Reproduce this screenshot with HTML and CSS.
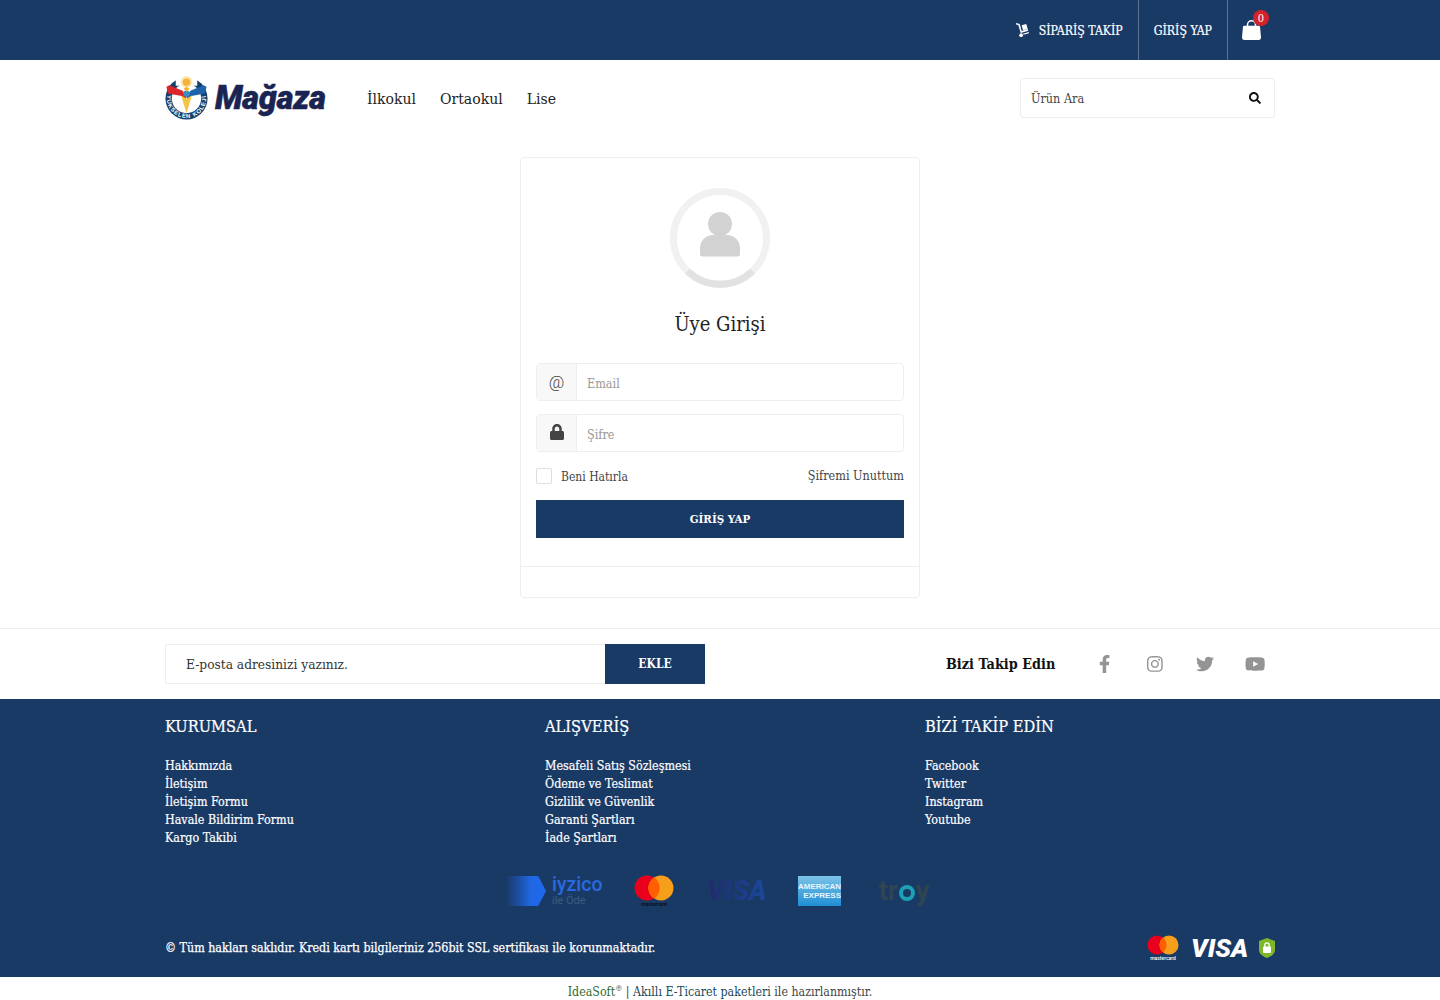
FILE: index.html
```html
<!DOCTYPE html>
<html lang="tr">
<head>
<meta charset="utf-8">
<title>Üye Girişi</title>
<link rel="stylesheet" href="styles.css">
</head>
<body>
<div class="topbar">
  <div class="container topbar-in">
    <a class="top-item"><svg class="top-ico" viewBox="0 0 16 16"><path d="M1 1.500l2.500 .6 2.600 8.600 8-2.400-.6-1.800-6.400 1.900L5 1 1.300 0z" fill="#fff"/><path d="M7 2.500l5-1.500 1.600 5.300-5 1.500z" fill="#fff"/><circle cx="6.500" cy="13" r="2" fill="#fff"/><path d="M9 12.600l6-1.800-.4-1.200-6 1.800z" fill="#fff"/></svg><span>SİPARİŞ TAKİP</span></a>
    <a class="top-item bordered">GİRİŞ YAP</a>
    <a class="cart">
      <svg class="bag" viewBox="0 0 20 22"><path d="M5.800 9V6a4.200 4.200 0 018.400 0v3" fill="none" stroke="#fff" stroke-width="1.600"/><path d="M2.500 7h15a1.500 1.500 0 011.500 1.400l1 10.800a2.600 2.600 0 01-2.600 2.800H2.600A2.600 2.600 0 010 19.200L1 8.400A1.500 1.500 0 012.500 7z" fill="#fff"/></svg>
      <span class="badge">0</span>
    </a>
  </div>
</div>

<header class="container header">
  <a class="logo">
    <svg class="logo-mark" viewBox="0 0 46 46">
      <defs><path id="arc" d="M4.200 17.200A20 20 0 1 0 41.800 17.200"/></defs>
      <circle cx="23" cy="24" r="21.500" fill="#15406b"/>
      <circle cx="23" cy="24" r="15" fill="#fff"/>
      <path d="M12 0h22v11H12z" fill="#fff"/>
      <circle cx="23" cy="7" r="6" fill="#fbe6ae"/>
      <circle cx="23" cy="7.500" r="3.800" fill="#f5b335"/>
      <path d="M2.500 12l3-1.500L19 16l4 6-1 4-4-4.500L4 19z" fill="#d9252b"/>
      <path d="M43.500 12l-3-1.500L27 16l-4 6 1 4 4-4.500L42 19z" fill="#1f63ad"/>
      <path d="M17.500 21l5.500 3 5.500-3L23 39z" fill="#f6c343"/>
      <circle cx="23" cy="19" r="3.200" fill="#3b8fc4"/>
      <path d="M20 14l3 3 3-3-3-2z" fill="#f5b335"/>
      <text class="logo-arc"><textPath href="#arc" startOffset="50%" text-anchor="middle">YÜKSELEN KOLEJİ</textPath></text>
    </svg>
    <span class="logo-word">Mağaza</span>
  </a>
  <nav class="nav"><a>İlkokul</a><a>Ortaokul</a><a>Lise</a></nav>
  <div class="search">
    <span>Ürün Ara</span>
    <svg class="search-ico" viewBox="0 0 512 512"><path fill="#111" d="M505 442.700L405.300 343c-4.500-4.500-10.600-7-17-7H372c27.600-35.300 44-79.700 44-128C416 93.100 322.900 0 208 0S0 93.100 0 208s93.100 208 208 208c48.300 0 92.700-16.400 128-44v16.300c0 6.400 2.500 12.500 7 17l99.700 99.700c9.400 9.400 24.600 9.400 33.900 0l28.300-28.300c9.400-9.400 9.400-24.600.1-34zM208 336c-70.700 0-128-57.200-128-128 0-70.700 57.200-128 128-128 70.700 0 128 57.200 128 128 0 70.700-57.200 128-128 128z"/></svg>
  </div>
</header>

<main class="main">
  <section class="card">
    <div class="card-body">
      <svg class="avatar" viewBox="0 0 100 100">
        <circle cx="50" cy="50" r="46.500" fill="none" stroke="#f1f1f1" stroke-width="7"/>
        <path d="M17.500 83A46.500 46.500 0 0 0 82.500 83" fill="none" stroke="#e2e2e2" stroke-width="7"/>
        <circle cx="50" cy="36" r="12" fill="#d2d2d2"/>
        <path d="M30 66V60a13 13 0 0 1 13-13h14a13 13 0 0 1 13 13v6a2.500 2.500 0 0 1-2.500 2.500h-35A2.500 2.500 0 0 1 30 66z" fill="#d2d2d2"/>
      </svg>
      <h1 class="title">Üye Girişi</h1>
      <div class="field">
        <span class="addon at">@</span>
        <span class="ph">Email</span>
      </div>
      <div class="field">
        <span class="addon"><svg class="lock" viewBox="0 0 448 512"><path fill="#444" d="M400 224h-24v-72C376 68.200 307.800 0 224 0S72 68.200 72 152v72H48c-26.500 0-48 21.500-48 48v192c0 26.500 21.500 48 48 48h352c26.500 0 48-21.500 48-48V272c0-26.500-21.500-48-48-48zm-104 0H152v-72c0-39.700 32.300-72 72-72s72 32.300 72 72v72z"/></svg></span>
        <span class="ph">Şifre</span>
      </div>
      <div class="options">
        <label class="remember"><span class="check"></span>Beni Hatırla</label>
        <a class="forgot">Şifremi Unuttum</a>
      </div>
      <a class="submit">GİRİŞ YAP</a>
    </div>
    <div class="card-foot"></div>
  </section>
</main>

<section class="news">
  <div class="container news-in">
    <div class="news-form">
      <span class="news-input">E-posta adresinizi yazınız.</span>
      <a class="news-btn">EKLE</a>
    </div>
    <div class="social">
      <strong class="social-title">Bizi Takip Edin</strong>
      <a class="soc"><svg viewBox="0 0 320 512" class="soc-ico"><path fill="#949494" d="M279.100 288l14.200-92.700h-88.900v-60.100c0-25.300 12.400-50 52.200-50h40.400V6.300S260.400 0 225.400 0c-73.200 0-121.100 44.400-121.100 124.700v70.600H22.900V288h81.400v224h100.200V288z"/></svg></a>
      <a class="soc"><svg viewBox="0 0 448 512" class="soc-ico"><path fill="#949494" d="M224.100 141c-63.600 0-114.900 51.300-114.900 114.900s51.300 114.900 114.900 114.900S339 319.500 339 255.900 287.700 141 224.100 141zm0 189.600c-41.100 0-74.700-33.500-74.700-74.700s33.500-74.700 74.700-74.700 74.700 33.500 74.700 74.700-33.600 74.700-74.700 74.700zm146.400-194.300c0 14.900-12 26.800-26.800 26.800-14.900 0-26.800-12-26.800-26.800s12-26.800 26.800-26.800 26.800 12 26.800 26.800zm76.100 27.200c-1.700-35.900-9.900-67.700-36.200-93.900-26.200-26.200-58-34.400-93.900-36.200-37-2.100-147.900-2.100-184.900 0-35.800 1.700-67.600 9.900-93.900 36.100s-34.400 58-36.200 93.900c-2.100 37-2.100 147.900 0 184.900 1.700 35.900 9.900 67.700 36.200 93.900s58 34.400 93.900 36.200c37 2.100 147.900 2.100 184.900 0 35.900-1.700 67.700-9.900 93.900-36.200 26.200-26.200 34.400-58 36.200-93.900 2.100-37 2.100-147.800 0-184.800zM398.800 388c-7.800 19.600-22.900 34.700-42.600 42.600-29.500 11.700-99.500 9-132.100 9s-102.700 2.600-132.100-9c-19.600-7.800-34.700-22.900-42.600-42.600-11.700-29.500-9-99.500-9-132.100s-2.600-102.700 9-132.100c7.800-19.600 22.900-34.700 42.600-42.600 29.500-11.700 99.500-9 132.100-9s102.700-2.600 132.100 9c19.600 7.800 34.700 22.900 42.600 42.600 11.700 29.500 9 99.500 9 132.100s2.700 102.700-9 132.100z"/></svg></a>
      <a class="soc"><svg viewBox="0 0 512 512" class="soc-ico"><path fill="#949494" d="M459.400 151.700c.3 4.500.3 9.100.3 13.600 0 138.700-105.600 298.600-298.600 298.600-59.500 0-114.700-17.200-161.100-47.100 8.400 1 16.600 1.300 25.300 1.300 49.100 0 94.200-16.600 130.300-44.800-46.100-1-84.800-31.200-98.100-72.800 6.500 1 13 1.600 19.800 1.600 9.400 0 18.800-1.300 27.600-3.600-48.100-9.700-84.100-52-84.100-103v-1.300c14 7.800 30.200 12.700 47.400 13.300-28.300-18.800-46.800-51-46.800-87.400 0-19.500 5.200-37.400 14.300-53 51.700 63.700 129.300 105.300 216.400 109.800-1.600-7.800-2.600-15.900-2.600-24 0-57.800 46.800-104.900 104.900-104.900 30.200 0 57.500 12.700 76.700 33.100 23.700-4.500 46.500-13.300 66.600-25.300-7.800 24-24.400 44.800-46.100 57.800 21.100-2.300 41.600-8.100 60.400-16.200-14.300 20.800-32.200 39.300-52.600 54.200z"/></svg></a>
      <a class="soc"><svg viewBox="0 0 576 512" class="soc-ico"><path fill="#949494" d="M549.700 124.100c-6.300-23.700-24.800-42.300-48.300-48.600C458.800 64 288 64 288 64S117.200 64 74.600 75.500c-23.500 6.300-42 24.900-48.300 48.600-11.400 42.900-11.400 132.300-11.400 132.300s0 89.400 11.400 132.300c6.300 23.700 24.800 41.500 48.300 47.800C117.200 448 288 448 288 448s170.800 0 213.400-11.500c23.500-6.300 42-24.200 48.300-47.800 11.400-42.900 11.400-132.300 11.400-132.300s0-89.400-11.400-132.300zm-317.500 213.500V175.200l142.700 81.200-142.700 81.200z"/></svg></a>
    </div>
  </div>
</section>

<footer class="footer">
  <div class="container">
    <div class="cols">
      <div class="col">
        <h4>KURUMSAL</h4>
        <a>Hakkımızda</a><a>İletişim</a><a>İletişim Formu</a><a>Havale Bildirim Formu</a><a>Kargo Takibi</a>
      </div>
      <div class="col">
        <h4>ALIŞVERİŞ</h4>
        <a>Mesafeli Satış Sözleşmesi</a><a>Ödeme ve Teslimat</a><a>Gizlilik ve Güvenlik</a><a>Garanti Şartları</a><a>İade Şartları</a>
      </div>
      <div class="col col-last">
        <h4>BİZİ TAKİP EDİN</h4>
        <a>Facebook</a><a>Twitter</a><a>Instagram</a><a>Youtube</a>
      </div>
    </div>
    <div class="pay-row">
      <div class="iyzico">
        <svg class="iyz-hex" viewBox="0 0 40 32"><defs><linearGradient id="hx" x1="0" x2="1"><stop offset="0" stop-color="#1c5fd0" stop-opacity="0"/><stop offset=".6" stop-color="#1f66e0"/><stop offset="1" stop-color="#1f6af0"/></linearGradient></defs><path d="M0 1h31a2 2 0 011.600 .8L40 16l-7.400 14.200a2 2 0 01-1.600 .8H0z" fill="url(#hx)"/></svg>
        <div class="iyz-text"><span class="iyz-name">iyzico</span><span class="iyz-sub">ile Öde</span></div>
      </div>
      <div class="mc-big">
        <svg viewBox="0 0 40 32"><circle cx="13" cy="13" r="12.500" fill="#e8001c"/><circle cx="27" cy="13" r="12.500" fill="#f79e1b"/><path d="M20 2.500a12.500 12.500 0 0 1 0 21 12.500 12.500 0 0 1 0-21z" fill="#ff5f00"/><text x="20" y="31" class="mc-t dark">mastercard</text></svg>
      </div>
      <span class="visa-dim">VISA</span>
      <div class="amex"><span>AMERICAN</span><span>EXPRESS</span></div>
      <div class="troy"><span>tr</span><i></i><span>y</span></div>
    </div>
    <div class="copy-row">
      <p class="copy">© Tüm hakları saklıdır. Kredi kartı bilgileriniz 256bit SSL sertifikası ile korunmaktadır.</p>
      <div class="secure">
        <svg class="mc-small" viewBox="0 0 32 26"><circle cx="10" cy="10" r="9.500" fill="#e8001c"/><circle cx="22" cy="10" r="9.500" fill="#f79e1b"/><path d="M16 2.600a9.500 9.500 0 0 1 0 14.800 9.500 9.500 0 0 1 0-14.800z" fill="#ff5f00"/><text x="16" y="25" class="mc-t">mastercard</text></svg>
        <span class="visa">VISA</span>
        <svg class="shield" viewBox="0 0 16 20"><path d="M8 0l8 3v9c0 4-4 6.500-8 8-4-1.500-8-4-8-8V3z" fill="#7fb72a"/><rect x="4" y="8.500" width="8" height="6.500" rx="1" fill="#fff"/><path d="M5.800 9V7a2.200 2.200 0 0 1 4.400 0v2" fill="none" stroke="#fff" stroke-width="1.300"/></svg>
      </div>
    </div>
  </div>
</footer>
<div class="credit"><a class="green">IdeaSoft</a><sup>®</sup> | <a class="navy">Akıllı E-Ticaret paketleri</a> ile hazırlanmıştır.</div>
</body>
</html>
```
FILE: styles.css
```css
* { box-sizing: border-box; }
html, body { margin: 0; padding: 0; }
body {
  font-family: "DejaVu Serif Condensed", "DejaVu Serif", "Liberation Serif", serif;
  color: #222;
  background: #fff;
  height: 1000px;
  overflow: hidden;
}
.container { width: 1110px; margin: 0 auto; }

.topbar { background: #1a3a66; height: 60px; }
.topbar-in { display: flex; justify-content: flex-end; height: 60px; }
.top-item { display: flex; align-items: center; color: #fff; font-size: 12.200px; padding: 2px 15px 0; height: 60px; -webkit-text-stroke: .2px #fff; }
.top-item.bordered { border-left: 1px solid #5a7395; border-right: 1px solid #5a7395; }
.top-ico { width: 15px; height: 15px; margin-right: 9px; margin-bottom: 2px; }
.cart { position: relative; width: 47px; height: 60px; }
.bag { position: absolute; left: 14px; top: 19px; width: 19px; height: 21px; }
.badge { position: absolute; left: 25px; top: 10px; width: 16px; height: 16px; border-radius: 50%; background: #d3222a; color: #fff; font-size: 11px; line-height: 17px; text-align: center; }

.header { display: flex; align-items: center; height: 76px; }
.logo { display: flex; align-items: center; width: 202px; flex: none; }
.logo-mark { width: 45px; height: 45px; flex: none; margin-top: -1px; margin-left: -1px; }
.logo-arc { font-family: "Liberation Sans", sans-serif; font-weight: 700; font-size: 6px; fill: #fff; letter-spacing: .9px; }
.logo-word { font-family: "Roboto", sans-serif; font-weight: 900; font-style: italic; font-size: 32.400px; color: #1a2452; margin-left: 6px; letter-spacing: -.2px; -webkit-text-stroke: .5px #1a2452; }
.nav { display: flex; gap: 24px; font-size: 15.600px; color: #222; flex: 1; padding-top: 2px; }
.search { width: 255px; height: 40px; border: 1px solid #eee; border-radius: 3px; display: flex; align-items: center; justify-content: space-between; padding: 0 13px 0 10px; font-size: 12.500px; color: #444; }
.search-ico { width: 12px; height: 12px; }

.main { display: flex; justify-content: center; padding: 21px 0 30px; }
.card { width: 400px; height: 441px; border: 1px solid #eee; border-radius: 4px; display: flex; flex-direction: column; }
.card-body { padding: 30px 15px 0; height: 409px; border-bottom: 1px solid #eee; display: flex; flex-direction: column; }
.avatar { width: 100px; height: 100px; align-self: center; flex: none; }
.title { font-weight: 400; font-size: 20px; line-height: 24px; color: #222; text-align: center; margin: 24px 0 27px; }
.field { display: flex; align-items: center; height: 38px; border: 1px solid #eee; border-radius: 4px; margin-bottom: 13px; font-size: 12.500px; color: #999; }
.ph { padding-top: 2px; }
.addon { width: 40px; height: 36px; background: #f8f8f8; border-right: 1px solid #eee; display: flex; align-items: center; justify-content: center; color: #444; margin-right: 10px; flex: none; }
.addon.at { font-family: "Roboto", sans-serif; font-size: 17px; font-weight: 300; }
.lock { width: 14px; height: 16px; margin-bottom: 3px; }
.options { display: flex; justify-content: space-between; align-items: center; height: 22px; font-size: 12px; color: #444; margin: 1px 0 12px; }
.remember { display: flex; align-items: center; }
.forgot { font-size: 12.500px; line-height: 14px; margin-bottom: 2px; }
.check { width: 16px; height: 16px; border: 1px solid #ddd; border-radius: 2px; margin-right: 9px; margin-bottom: 3px; }
.submit { background: #1a3a66; color: #fff; height: 38px; display: flex; align-items: center; justify-content: center; font-size: 11.500px; font-weight: 700; }
.card-foot { flex: 1; }

.news { border-top: 1px solid #eee; height: 71px; }
.news-in { display: flex; justify-content: space-between; align-items: center; height: 70px; }
.news-form { display: flex; width: 540px; height: 40px; }
.news-input { flex: 1; border: 1px solid #eee; border-right: 0; border-radius: 3px 0 0 3px; display: flex; align-items: center; padding-left: 20px; font-size: 13.600px; color: #333; }
.news-btn { width: 100px; background: #1a3a66; color: #fff; display: flex; align-items: center; justify-content: center; font-size: 12px; font-weight: 700; }
.social { display: flex; align-items: center; margin-right: -5px; }
.social-title { font-size: 14.300px; color: #111; margin-right: 25px; width: 109px; white-space: nowrap; }
.soc { width: 50px; height: 24px; display: flex; align-items: center; justify-content: center; }
.soc-ico { height: 18px; }

.footer { background: #1a3a66; height: 278px; color: #fff; }
.cols { display: flex; padding-top: 18px; height: 160px; }
.col { flex: 0 0 380px; display: flex; flex-direction: column; }
.col-last { flex: 1; }
.col h4 { font-weight: 400; font-size: 16.300px; line-height: 20px; margin: 0 0 20px; -webkit-text-stroke: .2px #fff; }
.col a { font-size: 12.400px; line-height: 18px; -webkit-text-stroke: .2px #fff; }

.pay-row { display: flex; align-items: center; justify-content: center; height: 32px; margin-top: 16px; margin-left: -2px; }
.iyzico { display: flex; align-items: center; width: 100px; }
.iyz-hex { width: 40px; height: 32px; flex: none; }
.iyz-text { display: flex; flex-direction: column; margin-left: 6px; }
.iyz-name { font-family: "Roboto", sans-serif; font-weight: 500; font-size: 19.500px; line-height: 18px; color: #2a6ae0; }
.iyz-sub { font-family: "Roboto", sans-serif; font-size: 11px; line-height: 13px; color: #3b5a82; }
.mc-big { width: 40px; height: 32px; margin-left: 28px; }
.mc-big svg { width: 40px; height: 32px; display: block; }
.mc-t { font-family: "Roboto", sans-serif; font-size: 5px; font-weight: 500; fill: #fff; text-anchor: middle; }
.mc-t.dark { fill: #0a1020; font-weight: 700; }
.visa-dim { font-family: "Roboto", sans-serif; font-weight: 900; font-style: italic; font-size: 27px; margin-left: 33px; width: 62px; background: linear-gradient(90deg, #22296a, #1a4aa0); -webkit-background-clip: text; background-clip: text; color: transparent; }
.amex { width: 43px; height: 30px; margin-left: 29px; background: linear-gradient(180deg, #7cc4e8, #1f8fd4); display: flex; flex-direction: column; justify-content: center; font-family: "Liberation Sans", sans-serif; font-size: 8px; line-height: 9px; font-weight: 700; color: #e9f5fc; white-space: nowrap; overflow: hidden; }
.amex span:last-child { text-align: right; }
.troy { display: flex; align-items: center; justify-content: center; width: 56px; margin-left: 35px; font-family: "Roboto", sans-serif; font-weight: 700; font-size: 27px; color: #2f4550; }
.troy i { width: 16px; height: 16px; border-radius: 50%; border: 4px solid #1d9fb5; margin: 3px 1px 0; }

.copy-row { display: flex; justify-content: space-between; align-items: center; margin-top: 28px; }
.copy { margin: 0; font-size: 12.330px; -webkit-text-stroke: .25px #fff; }
.secure { display: flex; align-items: center; }
.mc-small { width: 32px; height: 26px; }
.visa { font-family: "Roboto", sans-serif; font-weight: 900; font-style: italic; font-size: 26px; line-height: 26px; color: #fff; margin-left: 12px; width: 56px; }
.shield { width: 16px; height: 20px; margin-left: 12px; }

.credit { text-align: center; font-size: 12.300px; line-height: 28px; padding-top: 1px; color: #444; }
.credit sup { font-size: 8px; line-height: 0; }
.green { color: #2f6b2f; }
.navy { color: #1a4a5a; }
```
